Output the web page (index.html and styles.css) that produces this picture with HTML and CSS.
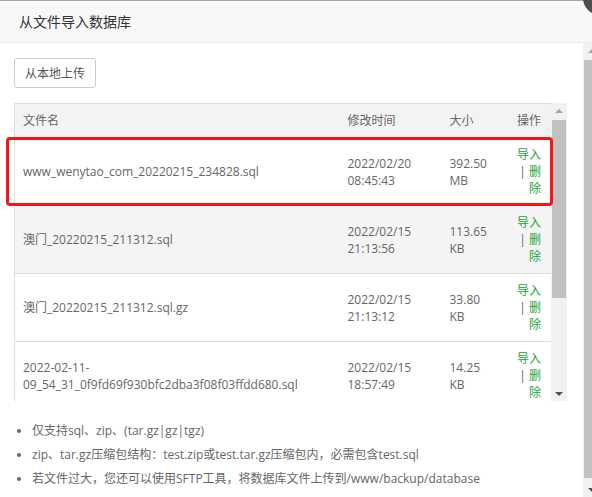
FILE: index.html
```html
<!DOCTYPE html>
<html lang="zh-CN">
<head>
<meta charset="utf-8">
<title>从文件导入数据库</title>
<link rel="stylesheet" href="styles.css">
</head>
<body>
<div class="dialog">
  <div class="title">从文件导入数据库<span class="close"></span></div>
  <div class="main">
    <div class="content">
      <button class="btn" type="button">从本地上传</button>
      <div class="grid">
        <div class="table-box">
          <table class="files">
            <colgroup>
              <col class="c-name"><col class="c-time"><col class="c-size"><col class="c-op">
            </colgroup>
            <thead>
              <tr><th>文件名</th><th>修改时间</th><th>大小</th><th class="op">操作</th></tr>
            </thead>
            <tbody>
              <tr><td>www_wenytao_com_20220215_234828.sql</td><td>2022/02/20 08:45:43</td><td>392.50 MB</td><td class="op"><a>导入</a> | <a>删除</a></td></tr>
              <tr class="hover"><td>澳门_20220215_211312.sql</td><td>2022/02/15 21:13:56</td><td>113.65 KB</td><td class="op"><a>导入</a> | <a>删除</a></td></tr>
              <tr><td>澳门_20220215_211312.sql.gz</td><td>2022/02/15 21:13:12</td><td>33.80 KB</td><td class="op"><a>导入</a> | <a>删除</a></td></tr>
              <tr><td>2022-02-11-09_54_31_0f9fd69f930bfc2dba3f08f03ffdd680.sql</td><td>2022/02/15 18:57:49</td><td>14.25 KB</td><td class="op"><a>导入</a> | <a>删除</a></td></tr>
            </tbody>
          </table>
        </div>
        <div class="vscroll inner">
          <div class="arrow up"></div>
          <div class="thumb"></div>
          <div class="spacer"></div>
          <div class="arrow down"></div>
        </div>
      </div>
      <ul class="tips">
        <li>仅支持sql、zip、(tar.gz|gz|tgz)</li>
        <li>zip、tar.gz压缩包结构：test.zip或test.tar.gz压缩包内，必需包含test.sql</li>
        <li>若文件过大，您还可以使用SFTP工具，将数据库文件上传到/www/backup/database</li>
      </ul>
      <div class="mark"></div>
    </div>
    <div class="vscroll outer">
      <div class="arrow up"></div>
      <div class="thumb"></div>
      <div class="spacer"></div>
      <div class="arrow down"></div>
    </div>
  </div>
</div>
</body>
</html>
```

FILE: styles.css
```css
html, body {
  margin: 0;
  padding: 0;
}
body {
  width: 592px;
  height: 497px;
  overflow: hidden;
  background: #fff;
  font-family: "Open Sans", "Noto Sans CJK SC", sans-serif;
  font-size: 12px;
  color: #666;
}
.dialog {
  border-top: 1px solid #a6a6a6;
}
.title {
  position: relative;
  height: 41px;
  line-height: 41px;
  padding-left: 19px;
  background: #f8f8f8;
  border-bottom: 1px solid #eaeaea;
  font-size: 14px;
  color: #333;
}
.close {
  position: absolute;
  right: -25px;
  top: -20px;
  width: 34px;
  height: 34px;
  border-radius: 50%;
  background: #4f4f4f;
}
.main {
  display: flex;
  width: 600px;
  height: 454px;
}
.content {
  position: relative;
  flex: none;
  width: 583px;
  box-sizing: border-box;
  padding: 15px 16px 0 14px;
}
.btn {
  display: block;
  height: 30px;
  padding: 0 10px;
  border: 1px solid #ccc;
  border-radius: 3px;
  background: #fff;
  font-family: "Open Sans", "Noto Sans CJK SC", sans-serif;
  font-size: 12px;
  color: #555;
}
.grid {
  display: flex;
  margin-top: 15px;
  height: 298px;
}
.table-box {
  flex: none;
  width: 537px;
  overflow: hidden;
}
.files {
  width: 537px;
  table-layout: fixed;
  border-collapse: collapse;
  border: 1px solid #ddd;
}
.c-name { width: 324px; }
.c-time { width: 102px; }
.c-size { width: 65px; }
.c-op { width: 46px; }
.files th,
.files td {
  padding: 8px 9px;
  line-height: 17px;
  text-align: left;
  font-weight: normal;
  color: #666;
  vertical-align: middle;
  border-bottom: 1px solid #ddd;
}
.files th:first-child,
.files td:first-child {
  padding-left: 8px;
}
.files th {
  background: #f3f3f3;
}
.files .op {
  text-align: right;
  padding-right: 10px;
}
.files tr.hover td {
  background: #f4f4f4;
}
.files a {
  color: #20a53a;
}
.vscroll {
  flex: none;
  display: flex;
  flex-direction: column;
  background: #f1f1f1;
}
.vscroll.inner {
  width: 16px;
}
.vscroll.outer {
  width: 17px;
}
.arrow {
  flex: none;
  height: 17px;
  position: relative;
}
.arrow::after {
  content: "";
  position: absolute;
  left: 50%;
  top: 50%;
  margin-left: -4px;
  border-left: 4px solid transparent;
  border-right: 4px solid transparent;
}
.arrow.up::after {
  margin-top: -3px;
  border-bottom: 4px solid #a3a3a3;
}
.arrow.down::after {
  margin-top: -1px;
  border-top: 4px solid #505050;
}
.thumb {
  flex: none;
  margin: 0 1px;
  background: #c1c1c1;
}
.inner .thumb {
  height: 178px;
}
.outer .thumb {
  height: 418px;
}
.spacer {
  flex: 1;
}
.tips {
  margin: 18px 0 0;
  padding-left: 18px;
  line-height: 24px;
  color: #666;
}
.mark {
  position: absolute;
  left: 6px;
  top: 94px;
  width: 547px;
  height: 69px;
  box-sizing: border-box;
  border: 3px solid #f41414;
  border-radius: 4px;
}
```
